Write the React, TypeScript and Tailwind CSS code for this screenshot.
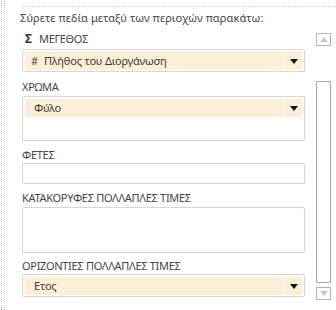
import React from "react";

const font = { fontFamily: '"Noto Sans", "Open Sans", sans-serif' };

function Arrow() {
  return (
    <svg width="8" height="5" viewBox="0 0 8 5" className="block">
      <path d="M0 0 H8 L4 5 Z" fill="#111" />
    </svg>
  );
}

function Field({ icon, text }: { icon?: string; text: string }) {
  return (
    <div className="flex h-[18px] bg-[#fcefd8]">
      <div className="flex flex-1 items-center text-[11px] leading-[16px] tracking-[-0.2px] text-[#3c3c3c]">
        {icon ? (
          <>
            <span className="ml-[6px] w-[13px]">{icon}</span>
            <span>{text}</span>
          </>
        ) : (
          <span className="ml-[9px]">{text}</span>
        )}
      </div>
      <div className="w-[1px] bg-white" />
      <div className="flex w-[17px] items-center justify-center">
        <Arrow />
      </div>
    </div>
  );
}

function Label({ children, mt }: { children: React.ReactNode; mt: string }) {
  return (
    <div className={`${mt} flex h-[16px] items-center text-[11px] leading-[16px] tracking-[-0.3px] text-[#444]`}>
      {children}
    </div>
  );
}

export default function App() {
  return (
    <div className="relative flex h-[310px] w-[336px] overflow-hidden bg-white" style={font}>
      <div className="ml-[1px] h-full w-[4px] border-x border-dotted border-[#c4c4c4]" />
      <div className="ml-[17px] flex flex-1 flex-col">
        <div className="mt-[6px] border-t border-dashed border-[#d8d8d8]" />
        <div className="mt-[1px] flex">
          <div className="flex w-[283px] flex-col">
            <div className="ml-[-2px] mt-[2px] h-[16px] text-[11px] leading-[16px] tracking-[0.1px] text-[#444]">
              Σύρετε πεδία μεταξύ των περιοχών παρακάτω:
            </div>
            <Label mt="mt-[5px]">
              <span className="ml-[3px] w-[14px] text-[12px] font-bold text-[#333]">Σ</span>
              <span>ΜΕΓΕΘΟΣ</span>
            </Label>
            <div className="mt-[2px] h-[23px] rounded-[2px] border border-[#d6d6d6] p-[2px]">
              <Field icon="#" text="Πλήθος του Διοργάνωση" />
            </div>
            <Label mt="mt-[7px]">ΧΡΩΜΑ</Label>
            <div className="mt-[1px] h-[45px] rounded-[2px] border border-[#d6d6d6] p-[2px]">
              <Field text="Φύλο" />
            </div>
            <Label mt="mt-[6px]">ΦΕΤΕΣ</Label>
            <div className="mt-[0px] h-[21px] rounded-[2px] border border-[#d6d6d6]" />
            <Label mt="mt-[6px]">ΚΑΤΑΚΟΡΥΦΕΣ ΠΟΛΛΑΠΛΕΣ ΤΙΜΕΣ</Label>
            <div className="mt-[1px] h-[46px] rounded-[2px] border border-[#d6d6d6]" />
            <Label mt="mt-[5px]">ΟΡΙΖΟΝΤΙΕΣ ΠΟΛΛΑΠΛΕΣ ΤΙΜΕΣ</Label>
            <div className="mt-[0px] h-[23px] rounded-[2px] border border-[#d6d6d6] p-[2px]">
              <Field text="Ετος" />
            </div>
          </div>
          <div className="ml-[11px] flex w-[15px] flex-col">
            <div className="mt-[25px] flex h-[13px] items-center justify-center border border-[#b4b4b4]">
              <svg width="8" height="5" viewBox="0 0 8 5">
                <path d="M0 5 H8 L4 0 Z" fill="#c6c6c6" />
              </svg>
            </div>
            <div className="mt-[35px] h-[202px] border border-[#a8a8a8]" />
            <div className="mt-[4px] flex h-[13px] items-center justify-center border border-[#b4b4b4]">
              <svg width="8" height="5" viewBox="0 0 8 5">
                <path d="M0 0 H8 L4 5 Z" fill="#c6c6c6" />
              </svg>
            </div>
          </div>
        </div>
      </div>
    </div>
  );
}
